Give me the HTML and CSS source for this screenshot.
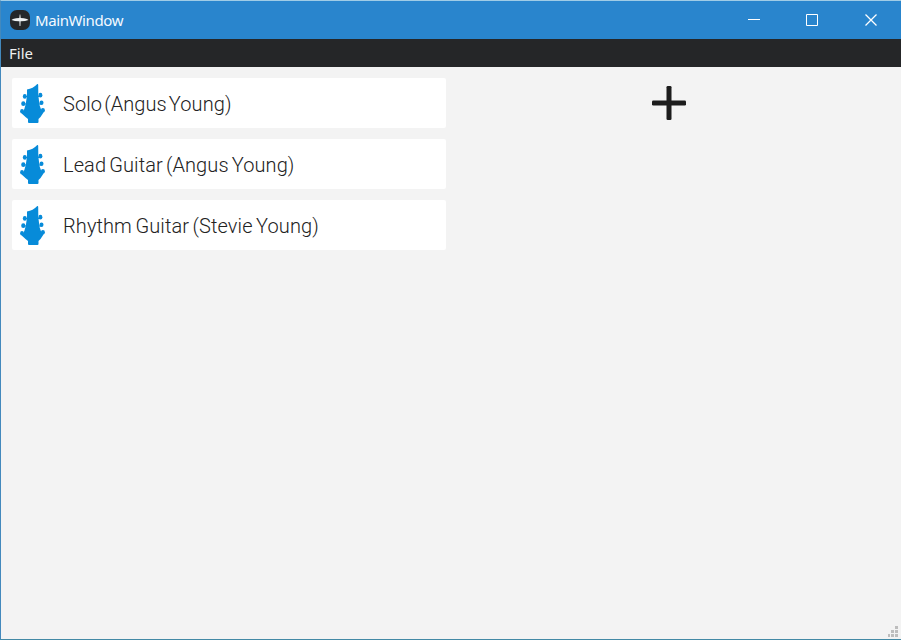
FILE: index.html
```html
<!DOCTYPE html>
<html lang="en">
<head>
<meta charset="utf-8">
<title>MainWindow</title>
<link rel="stylesheet" href="styles.css">
</head>
<body>
<svg class="symbols" aria-hidden="true">
  <symbol id="headstock" viewBox="0 0 26 40">
    <path d="M7 6.6Q13 5.5 17.3 1Q18.2 .8 18.2 2L18.3 12L19.5 22Q20.5 27 23.5 29.5L20.5 34L18.5 36V39Q18.5 40 17.5 40H9Q8 40 8 39V36L5.5 34L1.7 30.5Q4.8 27 5.7 21L7 13Z"/>
    <path d="M5 13.5H20M4 21H21M2 28.5H24" stroke="currentColor" stroke-width="1.2"/>
    <ellipse cx="4.8" cy="13.4" rx="2" ry="2.4"/><ellipse cx="3.3" cy="20.7" rx="2.1" ry="2.4"/><ellipse cx="2" cy="28.3" rx="1.9" ry="2.3"/>
    <ellipse cx="20.4" cy="12.2" rx="2" ry="2.4"/><ellipse cx="21.5" cy="19.7" rx="2" ry="2.3"/><ellipse cx="22.9" cy="27.2" rx="2" ry="2.3"/>
  </symbol>
</svg>
<div class="window">
  <header class="titlebar">
    <svg class="app-icon" viewBox="0 0 20 20"><rect width="20" height="20" rx="7" fill="#25272a"/><path d="M1.5 10L3 9Q6 8 9.3 8L9.7 4.5H10.3L10.7 8Q14 8 17 9L18.5 10Q15 11.3 10.6 11.2L10.4 16H9.6L9.4 11.2Q5 11.3 1.5 10Z" fill="#eef1f3"/></svg>
    <span class="title">MainWindow</span>
    <div class="controls">
      <svg viewBox="0 0 12 12"><path d="M0 5.5H12"/></svg>
      <svg viewBox="0 0 12 12"><path d="M.5 .5H11.5V11.5H.5Z"/></svg>
      <svg viewBox="0 0 12 12"><path class="close" d="M.5 .5L11.5 11.5M11.5 .5L.5 11.5"/></svg>
    </div>
  </header>
  <nav class="menubar"><span>File</span></nav>
  <main class="content">
    <div class="tracks">
      <div class="track"><svg><use href="#headstock"/></svg><span class="solo">Solo (Angus Young)</span></div>
      <div class="track"><svg><use href="#headstock"/></svg><span class="lead">Lead Guitar (Angus Young)</span></div>
      <div class="track"><svg><use href="#headstock"/></svg><span class="rhythm">Rhythm Guitar (Stevie Young)</span></div>
    </div>
    <div class="add"><svg viewBox="0 0 34 34"><rect x="14.5" width="5" height="34" rx="1.3"/><rect y="14.5" width="34" height="5" rx="1.3"/></svg></div>
  </main>
  <svg class="grip" viewBox="0 0 11 11"><path d="M7 0h3v3H7zM3 4h3v3H3zM7 4h3v3H7zM0 8h2v3H0zM3 8h3v3H3zM7 8h3v3H7z"/></svg>
</div>
</body>
</html>
```
FILE: styles.css
```css
* { box-sizing: border-box; }
body { margin: 0; }
.symbols { position: absolute; width: 0; height: 0; }
.window {
  position: relative;
  display: flex;
  flex-direction: column;
  width: 901px;
  height: 640px;
  overflow: hidden;
  background: #f3f3f3;
  border-top: 1px solid #a0cce6;
  border-left: 1px solid #4389bd;
  border-bottom: 1px solid #4389a5;
  font-family: "Noto Sans", sans-serif;
}
.titlebar {
  display: flex;
  align-items: center;
  height: 38px;
  padding-left: 9px;
  background: #2985cd;
  color: #f4faff;
}
.app-icon { width: 20px; height: 20px; }
.title { margin-left: 5px; font-size: 15px; line-height: 20px; letter-spacing: -0.4px; }
.controls { display: flex; gap: 47px; margin-left: auto; padding-right: 24px; }
.controls svg { width: 12px; height: 12px; fill: none; stroke: #fff; stroke-width: 1; }
.controls svg:first-child { margin-right: -1px; }
.controls .close { stroke-width: 1.3; }
.menubar {
  height: 28px;
  padding-left: 8px;
  background: #252628;
  color: #f0f0f0;
  font-size: 15px;
  line-height: 29px;
}
.content { display: flex; padding: 11px 0 0 11px; }
.tracks { display: flex; flex-direction: column; gap: 11px; width: 434px; }
.track {
  display: flex;
  align-items: center;
  height: 50px;
  padding-left: 8px;
  background: #fff;
  border-radius: 2px;
  color: #222;
  font: 300 20px/24px Roboto, sans-serif;
  white-space: nowrap;
}
.track svg { width: 26px; height: 40px; margin-right: 17px; color: #078bd9; fill: currentColor; }
.track span { padding-top: 2px; letter-spacing: 0.1px; }
.solo { word-spacing: -3px; }
.lead { word-spacing: -1.9px; }
.rhythm { word-spacing: -1.5px; }
.add { display: flex; flex: 1; justify-content: center; padding: 8px 9px 0 0; }
.add svg { width: 34px; height: 34px; fill: #1c1c1c; }
.grip { position: absolute; right: 2px; bottom: 2px; width: 11px; height: 11px; fill: #bdbdbd; }
```
